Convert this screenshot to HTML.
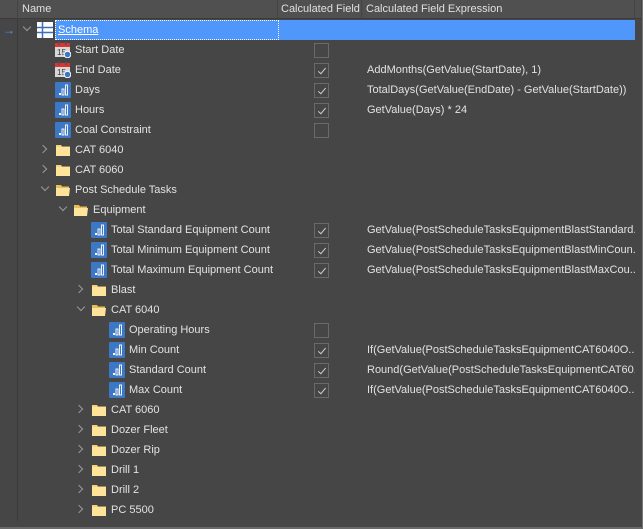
<!DOCTYPE html>
<html><head><meta charset="utf-8"><style>
*{margin:0;padding:0;box-sizing:border-box}
body{width:643px;height:529px;background:#464646;font-family:"Liberation Sans",sans-serif;font-size:11px;color:#e2e2e2;position:relative;overflow:hidden}
.hdr{position:absolute;top:0;height:19px;background:#505050;border-right:1px solid #444;border-bottom:1px solid #3c3c3c;line-height:19px;padding-left:4px;color:#e0e0e0;white-space:nowrap;overflow:hidden}
.r{position:absolute;left:0;width:635px;height:20px;line-height:20px;overflow:hidden}
.t{position:absolute;white-space:nowrap}
.ar{position:absolute;top:6px;width:6px;height:6px;border-right:1.5px solid #9a9a9a;border-bottom:1.5px solid #9a9a9a}
.rt{transform:rotate(-45deg)}
.dn{transform:rotate(45deg);top:4px}
.ic{position:absolute;top:2px;width:16px;height:16px}
.cb{position:absolute;left:314px;top:3px;width:15px;height:15px;border:1px solid #6a6a6a}
.cb.c::after{content:"";position:absolute;left:5px;top:2px;width:3px;height:7px;border-right:1px solid #cfcfcf;border-bottom:1px solid #cfcfcf;transform:rotate(40deg)}
.ex{position:absolute;left:367px;white-space:nowrap}
</style></head><body>
<div class="hdr" style="left:0;width:18px"></div>
<div class="hdr" style="left:18px;width:260px">Name</div>
<div class="hdr" style="left:278px;width:84px;padding-left:3px">Calculated Field</div>
<div class="hdr" style="left:362px;width:273px">Calculated Field Expression</div>
<div class="hdr" style="left:635px;width:7px"></div>
<div style="position:absolute;left:642px;top:0;width:1px;height:529px;background:#777"></div>
<div style="position:absolute;left:17px;top:19px;width:1px;height:502px;background:#3a3a3a"></div>
<div style="position:absolute;left:0;top:527px;width:643px;height:2px;background:#6a6a6a"></div>

<svg width="0" height="0" style="position:absolute"><defs>
<symbol id="bar" viewBox="0 0 16 16"><rect width="16" height="16" rx="1" fill="#3d78c6"/><rect x="4" y="11" width="2" height="2" fill="#fff"/><rect x="7" y="7" width="2" height="6" fill="none" stroke="#fff" stroke-width=".9"/><rect x="10.5" y="3" width="2" height="10" fill="none" stroke="#fff" stroke-width=".9"/></symbol>
<symbol id="fold" viewBox="0 0 16 16"><path d="M1 3h5l1 1.5h8V14H1z" fill="#f6d47b"/><rect x="1" y="5" width="14" height="9" fill="#fde49a"/></symbol>
<symbol id="fopen" viewBox="0 0 16 16"><path d="M1 3h5l1 1.5h7V7H1z" fill="#e9be5a"/><path d="M1 6h14l-1 8H1z" fill="#fde49a"/></symbol>
<symbol id="cal" viewBox="0 0 16 16"><rect x="0" y="1" width="15" height="14" fill="#d8d8d8"/><rect x="0" y="1" width="15" height="4" fill="#d33"/><rect x="3" y="0" width="2" height="3" fill="#555"/><rect x="10" y="0" width="2" height="3" fill="#555"/><text x="2" y="13" font-size="8" font-family="Liberation Sans" fill="#333">15</text><circle cx="12.5" cy="12.5" r="3.3" fill="#3d78c6" stroke="#fff"/></symbol>
<symbol id="grid" viewBox="0 0 16 16"><rect width="16" height="16" fill="#fff"/><path d="M0 5.5h16M0 10.5h16M5.5 0v16" stroke="#3b6fb6" stroke-width="1.5"/></symbol>
</defs></svg>

<div class="r" style="top:20px">
<div style="position:absolute;top:5px;color:#4f97fb;font-size:12px;line-height:10px;left:3px">→</div>
<div class="ar dn" style="left:24px"></div>
<svg class="ic" style="left:37px"><use href="#grid"/></svg>
<div style="position:absolute;left:55px;top:0;width:580px;height:20px;background:#4f97fb"></div>
<div style="position:absolute;left:55px;top:0;width:224px;height:20px;border:1px dotted #fff"></div>
<div class="t" style="left:58px;color:#fff;text-decoration:underline">Schema</div>
</div>

<div class="r" style="top:40px"><svg class="ic" style="left:55px"><use href="#cal"/></svg><div class="t" style="left:75px">Start Date</div><div class="cb"></div></div>
<div class="r" style="top:60px"><svg class="ic" style="left:55px"><use href="#cal"/></svg><div class="t" style="left:75px">End Date</div><div class="cb c"></div><div class="ex">AddMonths(GetValue(StartDate), 1)</div></div>
<div class="r" style="top:80px"><svg class="ic" style="left:55px"><use href="#bar"/></svg><div class="t" style="left:75px">Days</div><div class="cb c"></div><div class="ex">TotalDays(GetValue(EndDate) - GetValue(StartDate))</div></div>
<div class="r" style="top:100px"><svg class="ic" style="left:55px"><use href="#bar"/></svg><div class="t" style="left:75px">Hours</div><div class="cb c"></div><div class="ex">GetValue(Days) * 24</div></div>
<div class="r" style="top:120px"><svg class="ic" style="left:55px"><use href="#bar"/></svg><div class="t" style="left:75px">Coal Constraint</div><div class="cb"></div></div>
<div class="r" style="top:140px"><div class="ar rt" style="left:40px"></div><svg class="ic" style="left:55px"><use href="#fold"/></svg><div class="t" style="left:75px">CAT 6040</div></div>
<div class="r" style="top:160px"><div class="ar rt" style="left:40px"></div><svg class="ic" style="left:55px"><use href="#fold"/></svg><div class="t" style="left:75px">CAT 6060</div></div>
<div class="r" style="top:180px"><div class="ar dn" style="left:42px"></div><svg class="ic" style="left:55px"><use href="#fopen"/></svg><div class="t" style="left:75px">Post Schedule Tasks</div></div>
<div class="r" style="top:200px"><div class="ar dn" style="left:60px"></div><svg class="ic" style="left:73px"><use href="#fopen"/></svg><div class="t" style="left:93px">Equipment</div></div>
<div class="r" style="top:220px"><svg class="ic" style="left:91px"><use href="#bar"/></svg><div class="t" style="left:111px">Total Standard Equipment Count</div><div class="cb c"></div><div class="ex">GetValue(PostScheduleTasksEquipmentBlastStandard...</div></div>
<div class="r" style="top:240px"><svg class="ic" style="left:91px"><use href="#bar"/></svg><div class="t" style="left:111px">Total Minimum Equipment Count</div><div class="cb c"></div><div class="ex">GetValue(PostScheduleTasksEquipmentBlastMinCoun...</div></div>
<div class="r" style="top:260px"><svg class="ic" style="left:91px"><use href="#bar"/></svg><div class="t" style="left:111px">Total Maximum Equipment Count</div><div class="cb c"></div><div class="ex">GetValue(PostScheduleTasksEquipmentBlastMaxCou...</div></div>
<div class="r" style="top:280px"><div class="ar rt" style="left:76px"></div><svg class="ic" style="left:91px"><use href="#fold"/></svg><div class="t" style="left:111px">Blast</div></div>
<div class="r" style="top:300px"><div class="ar dn" style="left:78px"></div><svg class="ic" style="left:91px"><use href="#fopen"/></svg><div class="t" style="left:111px">CAT 6040</div></div>
<div class="r" style="top:320px"><svg class="ic" style="left:109px"><use href="#bar"/></svg><div class="t" style="left:129px">Operating Hours</div><div class="cb"></div></div>
<div class="r" style="top:340px"><svg class="ic" style="left:109px"><use href="#bar"/></svg><div class="t" style="left:129px">Min Count</div><div class="cb c"></div><div class="ex">If(GetValue(PostScheduleTasksEquipmentCAT6040O...</div></div>
<div class="r" style="top:360px"><svg class="ic" style="left:109px"><use href="#bar"/></svg><div class="t" style="left:129px">Standard Count</div><div class="cb c"></div><div class="ex">Round(GetValue(PostScheduleTasksEquipmentCAT60...</div></div>
<div class="r" style="top:380px"><svg class="ic" style="left:109px"><use href="#bar"/></svg><div class="t" style="left:129px">Max Count</div><div class="cb c"></div><div class="ex">If(GetValue(PostScheduleTasksEquipmentCAT6040O...</div></div>
<div class="r" style="top:400px"><div class="ar rt" style="left:76px"></div><svg class="ic" style="left:91px"><use href="#fold"/></svg><div class="t" style="left:111px">CAT 6060</div></div>
<div class="r" style="top:420px"><div class="ar rt" style="left:76px"></div><svg class="ic" style="left:91px"><use href="#fold"/></svg><div class="t" style="left:111px">Dozer Fleet</div></div>
<div class="r" style="top:440px"><div class="ar rt" style="left:76px"></div><svg class="ic" style="left:91px"><use href="#fold"/></svg><div class="t" style="left:111px">Dozer Rip</div></div>
<div class="r" style="top:460px"><div class="ar rt" style="left:76px"></div><svg class="ic" style="left:91px"><use href="#fold"/></svg><div class="t" style="left:111px">Drill 1</div></div>
<div class="r" style="top:480px"><div class="ar rt" style="left:76px"></div><svg class="ic" style="left:91px"><use href="#fold"/></svg><div class="t" style="left:111px">Drill 2</div></div>
<div class="r" style="top:500px"><div class="ar rt" style="left:76px"></div><svg class="ic" style="left:91px"><use href="#fold"/></svg><div class="t" style="left:111px">PC 5500</div></div>
</body></html>
